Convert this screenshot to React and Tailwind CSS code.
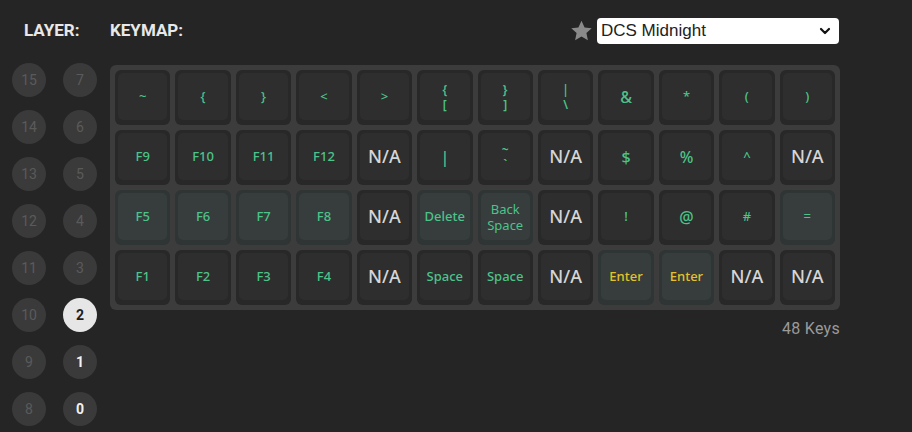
import React from "react";

const G = "text-[#4cc38a]";
const Y = "text-[#e5c22a]";

const rows = [
  [
    { l: "~" }, { l: "{" }, { l: "}" }, { l: "<" }, { l: ">" },
    { l: ["{", "["] }, { l: ["}", "]"] }, { l: ["|", "\\"] },
    { l: "&", big: true }, { l: "*" }, { l: "(" }, { l: ")" },
  ],
  [
    { l: "F9" }, { l: "F10" }, { l: "F11" }, { l: "F12" }, { na: true },
    { l: "|", big: true }, { l: ["~", "`"] }, { na: true },
    { l: "$", big: true }, { l: "%", big: true }, { l: "^" }, { na: true },
  ],
  [
    { l: "F5", hi: true }, { l: "F6", hi: true }, { l: "F7", hi: true }, { l: "F8", hi: true },
    { na: true }, { l: "Delete", hi: true }, { l: ["Back", "Space"], hi: true, word: true },
    { na: true }, { l: "!" }, { l: "@", big: true }, { l: "#" }, { l: "=", hi: true },
  ],
  [
    { l: "F1" }, { l: "F2" }, { l: "F3" }, { l: "F4" }, { na: true },
    { l: "Space" }, { l: "Space" }, { na: true },
    { l: "Enter", hi: true, y: true }, { l: "Enter", hi: true, y: true },
    { na: true }, { na: true },
  ],
];

function Key({ k }) {
  const outer = k.hi ? "bg-[#2f3435]" : "bg-[#282828]";
  const face = k.hi ? "bg-[#373c3d]" : "bg-[#2e2e2e]";
  let content;
  if (k.na) {
    content = (
      <span className="text-[18px] text-[#d6d6d6] font-medium">N/A</span>
    );
  } else if (Array.isArray(k.l)) {
    content = (
      <div
        className={`flex flex-col items-center ${k.y ? Y : G} ${
          k.word ? "text-[13px] leading-[16px]" : "text-[12px] leading-[15px] font-semibold"
        }`}
      >
        <span className="block">{k.l[0]}</span>
        <span className="block">{k.l[1]}</span>
      </div>
    );
  } else {
    content = (
      <span
        className={`${k.y ? Y : G} ${
          k.big ? "text-[16px]" : "text-[13px]"
        } font-medium`}
      >
        {k.l}
      </span>
    );
  }
  return (
    <div className={`${outer} rounded-[6px] h-[55px] p-[3px] pb-[5px] flex`}>
      <div
        className={`${face} rounded-[5px] flex-1 flex items-center justify-center`}
      >
        {content}
      </div>
    </div>
  );
}

function Circle({ n }) {
  let cls = "bg-[#3a3a3a] text-[#5a5a5a]";
  if (n === 2) cls = "bg-[#e6e6e6] text-[#1e1e1e] font-bold";
  else if (n === 1 || n === 0) cls = "bg-[#3a3a3a] text-[#f2f2f2] font-bold";
  return (
    <div
      className={`${cls} w-[34px] h-[34px] rounded-full flex items-center justify-center text-[14px]`}
    >
      {n}
    </div>
  );
}

export default function App() {
  const circles = [];
  for (let i = 15; i >= 8; i--) {
    circles.push(i, i - 8);
  }
  return (
    <div
      className="w-[912px] h-[432px] bg-[#252525] flex pl-[12px] pt-[18px] overflow-hidden"
      style={{ fontFamily: "Roboto, 'Liberation Sans', sans-serif" }}
    >
      <div className="w-[98px] shrink-0">
        <div className="h-[26px] flex items-center pl-[12px] text-[17px] font-bold text-[#e8e8e8]">
          LAYER:
        </div>
        <div className="mt-[19px] grid grid-cols-[34px_34px] gap-x-[17px] gap-y-[13px]">
          {circles.map((n) => (
            <Circle key={n} n={n} />
          ))}
        </div>
      </div>
      <div className="w-[730px] shrink-0">
        <div className="h-[26px] flex items-center justify-between">
          <div className="text-[17px] font-bold text-[#e8e8e8]">KEYMAP:</div>
          <div className="flex items-center gap-[3px] mr-[1px]">
            <svg width="25" height="24" viewBox="0 0 24 24" className="text-[#8a8a8a]">
              <path
                fill="currentColor"
                d="M12 1.8l3.1 6.6 7.1.8-5.3 4.9 1.5 7.1L12 17.6l-6.4 3.6 1.5-7.1-5.3-4.9 7.1-.8z"
              />
            </svg>
            <div className="w-[242px] h-[26px] bg-white rounded-[4px] flex items-center justify-between pl-[4px] pr-[8px]">
              <span
                className="text-[17px] text-[#222]"
                style={{ fontFamily: "'Liberation Sans', Arial, sans-serif" }}
              >
                DCS Midnight
              </span>
              <svg width="12" height="12" viewBox="0 0 12 12">
                <path
                  d="M2 4l4 4 4-4"
                  fill="none"
                  stroke="#111"
                  strokeWidth="2.2"
                  strokeLinecap="round"
                  strokeLinejoin="round"
                />
              </svg>
            </div>
          </div>
        </div>
        <div
          className="mt-[21px] bg-[#3c3c3c] rounded-[6px] p-[5px] grid grid-cols-12 gap-[5px]"
          style={{ fontFamily: "'Noto Sans', 'Open Sans', sans-serif" }}
        >
          {rows.flat().map((k, i) => (
            <Key key={i} k={k} />
          ))}
        </div>
        <div className="mt-[7px] text-right text-[16px] text-[#9a9a9a] tracking-[0.3px]">
          48 Keys
        </div>
      </div>
    </div>
  );
}
